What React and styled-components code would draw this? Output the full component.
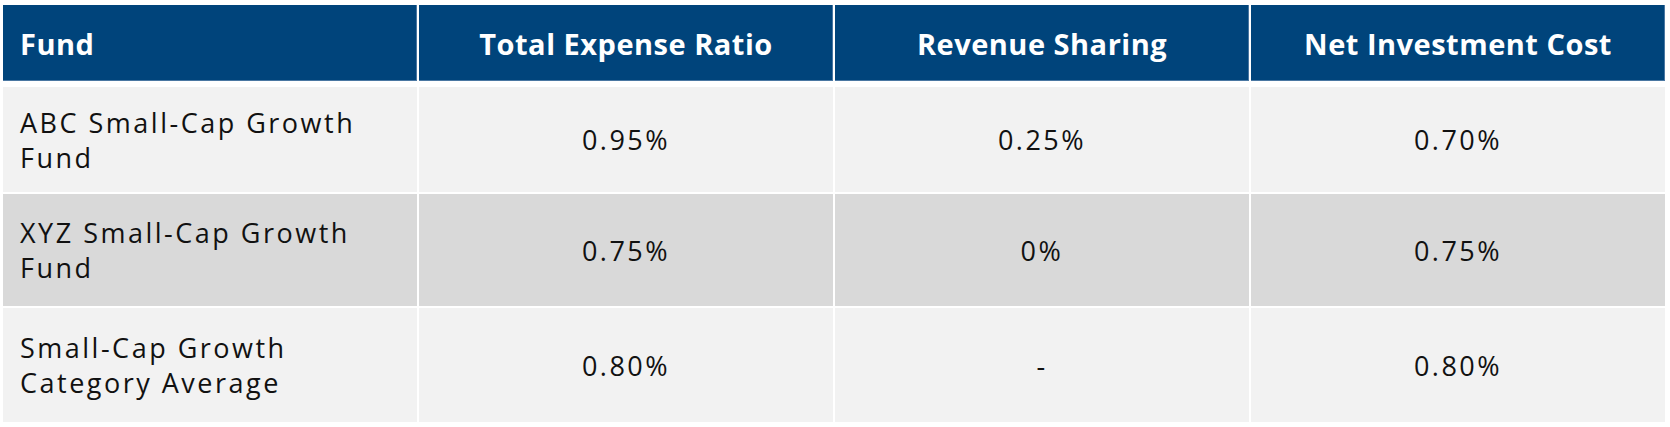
import styled, { createGlobalStyle } from "styled-components";

const GlobalStyle = createGlobalStyle`
  body {
    margin: 0;
    background: #ffffff;
    font-family: "Open Sans", "Noto Sans", sans-serif;
  }
`;

const Wrapper = styled.div`
  padding: 3px 3px 0 1px;
`;

const Table = styled.table`
  width: 100%;
  table-layout: fixed;
  border-collapse: separate;
  border-spacing: 2px;
`;

const HeadCell = styled.th`
  height: 76px;
  padding: 0 17px;
  background: #00447b;
  background-clip: padding-box;
  border-bottom: 4px solid #ffffff;
  box-shadow: inset -1px -1px 0 #4a77a2;
  color: #ffffff;
  font-size: 29px;
  font-weight: 700;
  letter-spacing: 0.5px;
  text-align: ${(props) => (props.$left ? "left" : "center")};
  vertical-align: middle;
`;

const Row = styled.tr`
  background: ${(props) => (props.$shade ? "#d9d9d9" : "#f2f2f2")};
`;

const Cell = styled.td`
  height: ${(props) => props.$h}px;
  padding: 0 17px;
  background: inherit;
  color: #111111;
  font-size: 27px;
  letter-spacing: 2.5px;
  line-height: 35px;
  text-align: ${(props) => (props.$left ? "left" : "center")};
  vertical-align: middle;
`;

const rows = [
  { fund: ["ABC Small-Cap Growth", "Fund"], ter: "0.95%", rev: "0.25%", net: "0.70%", h: 105 },
  { fund: ["XYZ Small-Cap Growth", "Fund"], ter: "0.75%", rev: "0%", net: "0.75%", h: 112, shade: true },
  { fund: ["Small-Cap Growth", "Category Average"], ter: "0.80%", rev: "-", net: "0.80%", h: 114 },
];

const App = () => {
  return (
    <>
      <GlobalStyle />
      <Wrapper>
        <Table>
          <thead>
            <tr>
              <HeadCell $left>Fund</HeadCell>
              <HeadCell>Total Expense Ratio</HeadCell>
              <HeadCell>Revenue Sharing</HeadCell>
              <HeadCell>Net Investment Cost</HeadCell>
            </tr>
          </thead>
          <tbody>
            {rows.map((r) => (
              <Row key={r.fund.join(" ")} $shade={r.shade}>
                <Cell $left $h={r.h}>
                  {r.fund[0]}
                  <br />
                  {r.fund[1]}
                </Cell>
                <Cell $h={r.h}>{r.ter}</Cell>
                <Cell $h={r.h}>{r.rev}</Cell>
                <Cell $h={r.h}>{r.net}</Cell>
              </Row>
            ))}
          </tbody>
        </Table>
      </Wrapper>
    </>
  );
};

export default App;
